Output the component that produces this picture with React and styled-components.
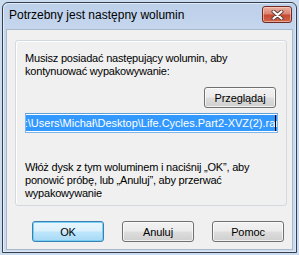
import React from 'react';
import styled, { createGlobalStyle } from 'styled-components';

const Global = createGlobalStyle`
  html, body { margin: 0; padding: 0; }
  body {
    width: 299px;
    height: 255px;
    overflow: hidden;
    background: #cbdcf0;
    font-family: "Liberation Sans", Arial, sans-serif;
  }
`;

const Window = styled.div`
  box-sizing: border-box;
  margin: 2px 0 0 2px;
  width: 295px;
  height: 251px;
  border: 1px solid #34404e;
  border-radius: 6px 6px 0 0;
  background: linear-gradient(to bottom, #bdd0ea 0%, #c6d7ee 12%, #ccdbef 100%);
  box-shadow: inset 1px 1px 0 rgba(255, 255, 255, 0.55), inset -1px -1px 0 rgba(255, 255, 255, 0.35);
  padding: 0 3px 2px 3px;
  display: flex;
  flex-direction: column;
`;

const TitleBar = styled.div`
  height: 26px;
  display: flex;
  align-items: flex-start;
  flex-shrink: 0;
`;

const Title = styled.div`
  margin: 5px 0 0 3px;
  font-size: 12px;
  line-height: 15px;
  color: #000;
  white-space: nowrap;
`;

const CloseButton = styled.div`
  box-sizing: border-box;
  margin: 3px 1px 0 auto;
  width: 30px;
  height: 17px;
  border: 1px solid #6e2a20;
  border-radius: 3px;
  background: linear-gradient(to bottom, #eab0a2 0%, #dc8470 45%, #c64a33 55%, #d2664b 100%);
  box-shadow: inset 0 0 0 1px rgba(255, 220, 210, 0.55);
  display: flex;
  align-items: center;
  justify-content: center;
`;

const Client = styled.div`
  flex: 1;
  border: 1px solid #a9b9cc;
  background: #f0f0f0;
  padding: 10px 0 0 8px;
  display: flex;
  flex-direction: column;
`;

const Panel = styled.div`
  box-sizing: border-box;
  width: 272px;
  height: 166px;
  border: 1px solid #d3d9df;
  border-radius: 3px;
  box-shadow: inset 1px 1px 0 #ffffff;
  padding: 11px 8px 0 9px;
  display: flex;
  flex-direction: column;
`;

const Text = styled.div`
  font-size: 11px;
  line-height: 13px;
  letter-spacing: -0.2px;
  color: #000;
  white-space: nowrap;
  margin-top: ${p => p.$top || 0}px;
`;

const BrowseRow = styled.div`
  display: flex;
  justify-content: flex-end;
  margin-top: 9px;
  padding-right: 2px;
`;

const Button = styled.div`
  box-sizing: border-box;
  width: 72px;
  height: 21px;
  border: 1px solid ${p => (p.$default ? '#3c7fb1' : '#707070')};
  border-radius: 3px;
  background: ${p =>
    p.$default
      ? 'linear-gradient(to bottom, #eaf6fd 0%, #d9f0fc 48%, #bee6fd 52%, #a7d9f5 100%)'
      : 'linear-gradient(to bottom, #f2f2f2 0%, #ebebeb 48%, #dddddd 52%, #cfcfcf 100%)'};
  box-shadow: inset 0 0 0 1px ${p => (p.$default ? 'rgba(110, 205, 245, 0.9)' : 'rgba(255, 255, 255, 0.7)')};
  display: flex;
  align-items: center;
  justify-content: center;
  font-size: 11px;
  letter-spacing: -0.1px;
  color: #000;
`;

const Field = styled.div`
  position: relative;
  box-sizing: border-box;
  margin-top: 5px;
  width: 100%;
  height: 20px;
  border: 1px solid #7eb4ea;
  border-top-color: #5e9fd8;
  background: #fff;
  padding: 1px 1px;
  display: flex;
  justify-content: flex-end;
  overflow: hidden;
`;

const Selected = styled.span`
  flex-shrink: 0;
  background: #3399ff;
  color: #fff;
  font-size: 11px;
  line-height: 16px;
  white-space: nowrap;
  margin-right: -3px;
`;

const Caret = styled.span`
  position: absolute;
  right: 1px;
  top: 1px;
  bottom: 1px;
  width: 1px;
  background: #000;
`;

const ButtonRow = styled.div`
  display: flex;
  gap: 18px;
  margin-top: 15px;
  padding-left: 17px;
`;

function CloseGlyph() {
  return (
    <svg width="13" height="10" viewBox="0 0 13 10">
      <path d="M2.5 1.5 L10.5 8.5 M10.5 1.5 L2.5 8.5" stroke="#5a3a36" strokeWidth="4" strokeLinecap="round" />
      <path d="M2.5 1.5 L10.5 8.5 M10.5 1.5 L2.5 8.5" stroke="#ffffff" strokeWidth="2.2" strokeLinecap="round" />
    </svg>
  );
}

export default function App() {
  return (
    <>
      <Global />
      <Window>
        <TitleBar>
          <Title>Potrzebny jest następny wolumin</Title>
          <CloseButton>
            <CloseGlyph />
          </CloseButton>
        </TitleBar>
        <Client>
          <Panel>
            <Text>
              Musisz posiadać następujący wolumin, aby
              <br />
              kontynuować wypakowywanie:
            </Text>
            <BrowseRow>
              <Button>Przeglądaj</Button>
            </BrowseRow>
            <Field>
              <Selected>C:\Users\Michał\Desktop\Life.Cycles.Part2-XVZ(2).rar</Selected>
              <Caret />
            </Field>
            <Text $top={28}>
              Włóż dysk z tym woluminem i naciśnij „OK”, aby
              <br />
              ponowić próbę, lub „Anuluj”, aby przerwać
              <br />
              wypakowywanie
            </Text>
          </Panel>
          <ButtonRow>
            <Button $default>OK</Button>
            <Button>Anuluj</Button>
            <Button>Pomoc</Button>
          </ButtonRow>
        </Client>
      </Window>
    </>
  );
}
